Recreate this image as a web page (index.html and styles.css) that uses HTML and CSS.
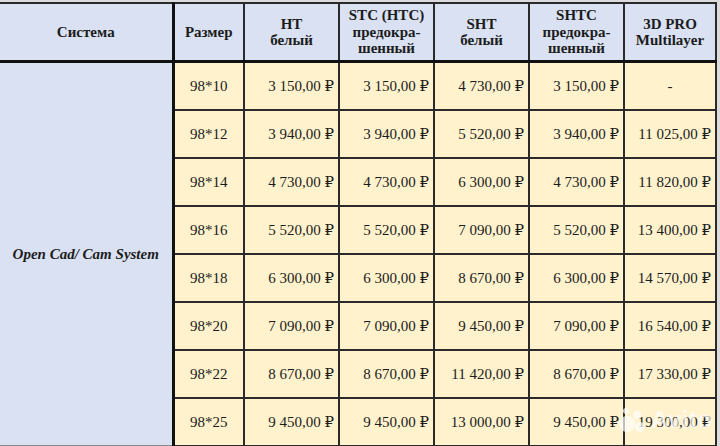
FILE: index.html
```html
<!DOCTYPE html>
<html lang="ru">
<head>
<meta charset="utf-8">
<link rel="stylesheet" href="styles.css">
</head>
<body>
<div class="sheet">
<table class="price">
  <colgroup>
    <col class="c-sys"><col class="c-size"><col class="c-p"><col class="c-p"><col class="c-p"><col class="c-p"><col class="c-last">
  </colgroup>
  <thead>
    <tr>
      <th class="thick-r">Система</th>
      <th>Размер</th>
      <th>HT<br>белый</th>
      <th>STC (HTC)<br>предокра-<br>шенный</th>
      <th>SHT<br>белый</th>
      <th>SHTC<br>предокра-<br>шенный</th>
      <th>3D PRO<br>Multilayer</th>
    </tr>
  </thead>
  <tbody>
    <tr>
      <td class="sys thick-r" rowspan="8">Open Cad/ Cam System</td>
      <td class="size">98*10</td><td>3 150,00 ₽</td><td>3 150,00 ₽</td><td>4 730,00 ₽</td><td>3 150,00 ₽</td><td class="dash">-</td>
    </tr>
    <tr><td class="size">98*12</td><td>3 940,00 ₽</td><td>3 940,00 ₽</td><td>5 520,00 ₽</td><td>3 940,00 ₽</td><td>11 025,00 ₽</td></tr>
    <tr><td class="size">98*14</td><td>4 730,00 ₽</td><td>4 730,00 ₽</td><td>6 300,00 ₽</td><td>4 730,00 ₽</td><td>11 820,00 ₽</td></tr>
    <tr><td class="size">98*16</td><td>5 520,00 ₽</td><td>5 520,00 ₽</td><td>7 090,00 ₽</td><td>5 520,00 ₽</td><td>13 400,00 ₽</td></tr>
    <tr><td class="size">98*18</td><td>6 300,00 ₽</td><td>6 300,00 ₽</td><td>8 670,00 ₽</td><td>6 300,00 ₽</td><td>14 570,00 ₽</td></tr>
    <tr><td class="size">98*20</td><td>7 090,00 ₽</td><td>7 090,00 ₽</td><td>9 450,00 ₽</td><td>7 090,00 ₽</td><td>16 540,00 ₽</td></tr>
    <tr><td class="size">98*22</td><td>8 670,00 ₽</td><td>8 670,00 ₽</td><td>11 420,00 ₽</td><td>8 670,00 ₽</td><td>17 330,00 ₽</td></tr>
    <tr><td class="size">98*25</td><td>9 450,00 ₽</td><td>9 450,00 ₽</td><td>13 000,00 ₽</td><td>9 450,00 ₽</td><td>19 300,00 ₽</td></tr>
  </tbody>
</table>
<div class="watermark">
  <svg class="wm-logo" width="30" height="26" viewBox="0 0 30 26">
    <circle cx="9" cy="17" r="8" fill="#fff"/>
    <circle cx="22" cy="20" r="5" fill="#fff"/>
    <circle cx="19" cy="8" r="4" fill="#fff"/>
    <circle cx="8" cy="4" r="3" fill="#fff"/>
  </svg>
  <span class="wm-text">Avito</span>
</div>
</div>
</body>
</html>
```
FILE: styles.css
```css
html, body {
  margin: 0;
  padding: 0;
}
body {
  background: #dcdcde;
  width: 720px;
  height: 446px;
  overflow: hidden;
  padding-top: 2px;
  box-sizing: border-box;
}
.sheet {
  position: relative;
  width: 716px;
}
.price {
  border-collapse: collapse;
  table-layout: fixed;
  width: 716px;
  font-family: "Liberation Serif", "Times New Roman", "DejaVu Serif", serif;
  font-size: 15px;
  color: #1c1c1c;
}
.c-sys { width: 173px; }
.c-size { width: 71px; }
.c-p { width: 95px; }
.c-last { width: 92px; }

.price th, .price td {
  border: 2px solid #2a2a2a;
  padding: 0;
}
.price th {
  background: #d9e1f2;
  font-weight: bold;
  line-height: 16.5px;
  height: 56px;
  text-align: center;
  vertical-align: middle;
  border-bottom-width: 3px;
  border-bottom-color: #111;
}
.price thead tr th:first-child { border-left: none; }
.price td {
  background: #fff2cc;
  height: 46px;
  line-height: 18px;
  text-align: right;
  padding-right: 4px;
  white-space: nowrap;
}
.price td.size {
  text-align: center;
  padding-right: 0;
}
.price td.dash {
  text-align: center;
  padding-right: 0;
}
.price td.sys {
  background: #d9e1f2;
  border-left: none;
  border-bottom-color: #888;
  text-align: center;
  font-weight: bold;
  font-style: italic;
  padding-right: 0;
}
.price .thick-r {
  border-right: 3px solid #111;
}

.watermark {
  position: absolute;
  left: 618px;
  top: 404px;
  display: flex;
  align-items: center;
  gap: 3px;
  opacity: 0.7;
}
.wm-text {
  font-family: "Liberation Sans", Arial, sans-serif;
  font-weight: bold;
  font-size: 24px;
  color: #fff;
  letter-spacing: 0.5px;
}
```
